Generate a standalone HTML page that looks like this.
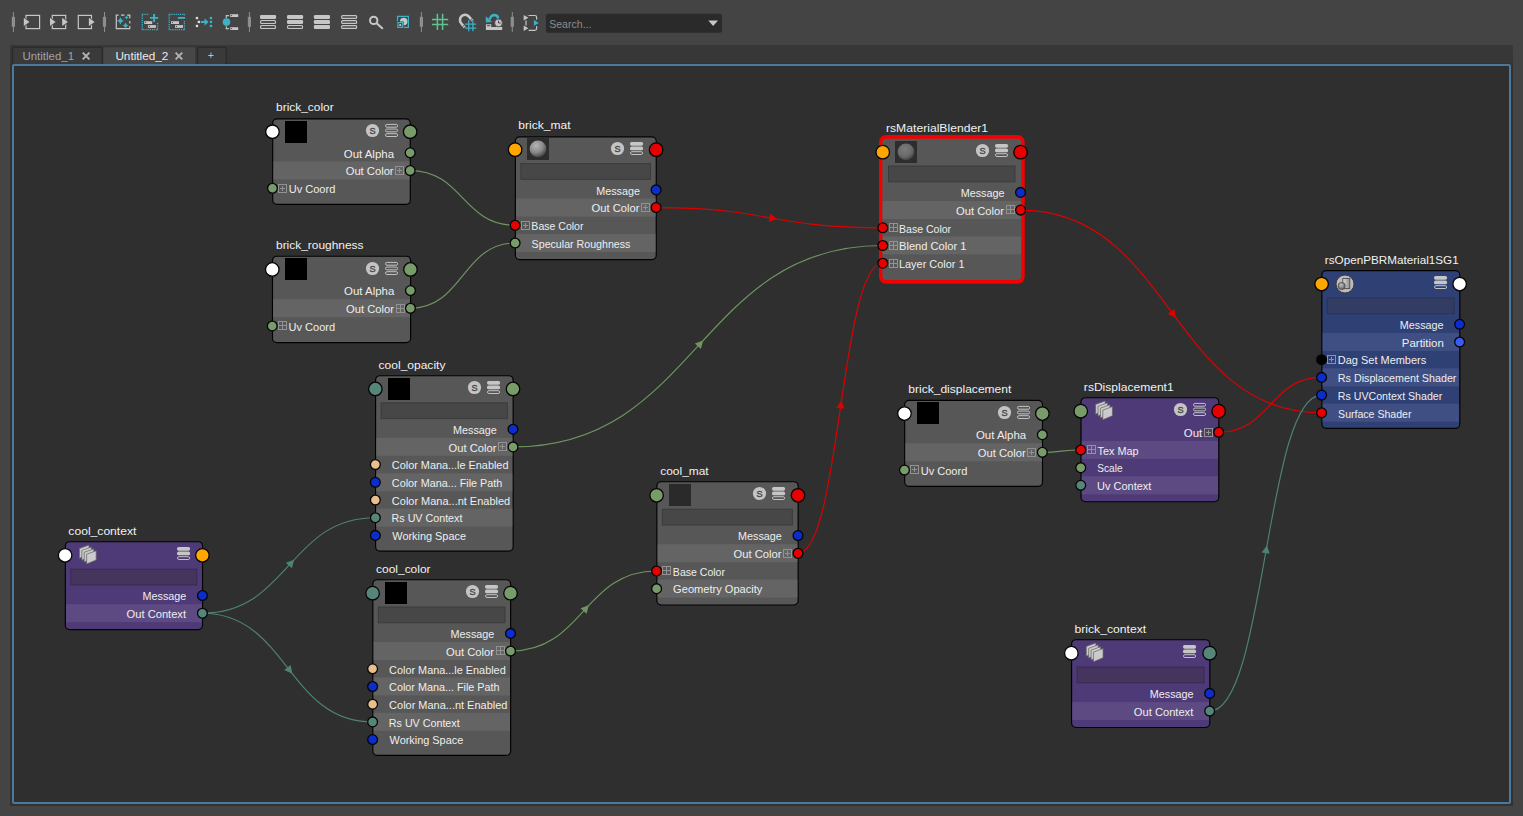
<!DOCTYPE html>
<html><head><meta charset="utf-8"><title>Node Editor</title>
<style>
html,body{margin:0;padding:0;}
body{width:1523px;height:816px;background:#444444;overflow:hidden;position:relative;font-family:"Liberation Sans",sans-serif;}
#tabbar{position:absolute;left:10px;top:45px;width:1503px;height:761px;background:#373737;}
#frame{position:absolute;left:10px;top:63px;width:1503px;height:743px;background:#323232;}
#canvas{position:absolute;left:12px;top:64px;width:1495px;height:736px;border:2px solid #4b799d;background:#2f2f2f;border-radius:2px;}
.tab{position:absolute;top:47px;height:17px;border:1px solid #2e2e2e;border-bottom:none;border-radius:3px 3px 0 0;box-sizing:border-box;font-size:11.3px;line-height:16px;color:#a9a9a9;background:#3b3b3b;white-space:nowrap;}
.tab.act{background:#484848;color:#e6e6e6;}
svg text.ttl{font-family:"Liberation Sans",sans-serif;font-size:11.6px;fill:#f1f1f1;}
svg text.rw{font-family:"Liberation Sans",sans-serif;font-size:10.4px;fill:#eeeeee;}
#g{position:absolute;left:0;top:0;}
</style></head><body>
<div id="tabbar"></div>
<div id="frame"></div>
<div id="canvas"></div>

<svg id="g" width="1523" height="816" viewBox="0 0 1523 816">
<defs>
<radialGradient id="sph" cx="0.38" cy="0.3" r="0.75"><stop offset="0" stop-color="#b4b4b4"/><stop offset="0.55" stop-color="#8a8a8a"/><stop offset="1" stop-color="#3e3e3e"/></radialGradient>
<linearGradient id="sgr" x1="0" y1="0" x2="1" y2="0"><stop offset="0" stop-color="#dcdcdc"/><stop offset="1" stop-color="#8c8c8c"/></linearGradient>
<radialGradient id="sgc" cx="0.4" cy="0.35" r="0.7"><stop offset="0" stop-color="#c4c4c4"/><stop offset="1" stop-color="#5a5a5a"/></radialGradient>
<radialGradient id="sph2" cx="0.42" cy="0.35" r="0.7"><stop offset="0" stop-color="#7c7c7c"/><stop offset="0.6" stop-color="#6a6a6a"/><stop offset="1" stop-color="#3c3c3c"/></radialGradient>
</defs>
<g id="toolbar">
<rect x="12.90" y="12" width="1" height="20" fill="#8e8e8e"/><rect x="11.80" y="16.8" width="3.2" height="10" fill="#8e8e8e"/>
<rect x="26" y="15.4" width="13.6" height="13.2" fill="none" stroke="#c6c6c6" stroke-width="1.2"/>
<path d="M23.80 17.80L29.50 21.90L23.80 26.00Z" fill="#c6c6c6" stroke="#444444" stroke-width="1.6" paint-order="stroke"/>
<rect x="52.3" y="15.4" width="13.4" height="13.2" fill="none" stroke="#c6c6c6" stroke-width="1.2"/>
<path d="M50.00 17.80L55.60 21.90L50.00 26.00Z" fill="#c6c6c6" stroke="#444444" stroke-width="1.6" paint-order="stroke"/>
<path d="M62.20 17.80L67.90 21.90L62.20 26.00Z" fill="#c6c6c6" stroke="#444444" stroke-width="1.6" paint-order="stroke"/>
<rect x="78.3" y="15.4" width="13.2" height="13.2" fill="none" stroke="#c6c6c6" stroke-width="1.2"/>
<path d="M88.90 17.80L94.60 21.90L88.90 26.00Z" fill="#c6c6c6" stroke="#444444" stroke-width="1.6" paint-order="stroke"/>
<rect x="104.00" y="12" width="1" height="20" fill="#8e8e8e"/><rect x="102.90" y="16.8" width="3.2" height="10" fill="#8e8e8e"/>
<path d="M118.6 15.2H116.3V28.7H129.8V26M121 15.2H124.5M127.2 15.2H129.8V18.2M129.8 21V23.5" fill="none" stroke="#c6c6c6" stroke-width="1.2"/>
<path d="M120.40 17.20Q121.19 20.01 124.00 20.80Q121.19 21.59 120.40 24.40Q119.61 21.59 116.80 20.80Q119.61 20.01 120.40 17.20Z" fill="#3db1c5"/>
<path d="M126.60 15.40Q127.06 17.04 128.70 17.50Q127.06 17.96 126.60 19.60Q126.14 17.96 124.50 17.50Q126.14 17.04 126.60 15.40Z" fill="#3db1c5"/>
<path d="M125.60 22.40Q126.26 24.74 128.60 25.40Q126.26 26.06 125.60 28.40Q124.94 26.06 122.60 25.40Q124.94 24.74 125.60 22.40Z" fill="#3db1c5"/>
<rect x="142.30" y="14.4" width="15.2" height="15.2" fill="none" stroke="#3db1c5" stroke-width="1.3" stroke-dasharray="1.25 0.921"/>
<rect x="149" y="13" width="10" height="9" fill="#444444"/>
<path d="M150 17.9H158.2M154.1 13.9V22" stroke="#3db1c5" stroke-width="1.9" fill="none"/>
<rect x="144.20" y="21.20" width="8" height="2.8" fill="#c6c6c6"/><rect x="145.10" y="22.10" width="1" height="1" fill="#3a3a3a"/>
<rect x="147.90" y="25.10" width="8" height="2.8" fill="#c6c6c6"/><rect x="148.80" y="26.00" width="1" height="1" fill="#3a3a3a"/>
<rect x="169.20" y="14.4" width="15.2" height="15.2" fill="none" stroke="#3db1c5" stroke-width="1.3" stroke-dasharray="1.25 0.921"/>
<rect x="177" y="15.5" width="9" height="5" fill="#444444"/>
<path d="M177.9 17.9H185.1" stroke="#3db1c5" stroke-width="1.8" fill="none"/>
<rect x="171.00" y="21.20" width="8" height="2.8" fill="#c6c6c6"/><rect x="171.90" y="22.10" width="1" height="1" fill="#3a3a3a"/>
<rect x="175.00" y="25.10" width="8" height="2.8" fill="#c6c6c6"/><rect x="175.90" y="26.00" width="1" height="1" fill="#3a3a3a"/>
<rect x="195.8" y="16.9" width="2.3" height="2.3" fill="#e0e0e0"/>
<rect x="197.7" y="20.8" width="2.3" height="2.3" fill="#e0e0e0"/>
<rect x="195.8" y="24.8" width="2.3" height="2.3" fill="#e0e0e0"/>
<rect x="209.8" y="16.9" width="2.3" height="2.3" fill="#3db1c5"/>
<rect x="209.8" y="20.8" width="2.3" height="2.3" fill="#3db1c5"/>
<rect x="209.8" y="24.8" width="2.3" height="2.3" fill="#3db1c5"/>
<path d="M200.8 21.1H204.6V18.2L208.5 22L204.6 25.8V22.9H200.8Z" fill="#3db1c5"/>
<circle cx="226.5" cy="22.1" r="3.8" fill="#3db1c5"/>
<path d="M226.3 17.9V15.6H228.9M226.3 26.3V28.6H228.9" fill="none" stroke="#c6c6c6" stroke-width="1.1"/>
<rect x="230.20" y="14.20" width="8" height="2.8" fill="#c6c6c6"/><rect x="231.10" y="15.10" width="1" height="1" fill="#3a3a3a"/>
<rect x="230.20" y="27.20" width="8" height="2.8" fill="#c6c6c6"/><rect x="231.10" y="28.10" width="1" height="1" fill="#3a3a3a"/>
<rect x="248.90" y="12" width="1" height="20" fill="#8e8e8e"/><rect x="247.80" y="16.8" width="3.2" height="10" fill="#8e8e8e"/>
<rect x="260.00" y="15.00" width="16.1" height="3.9" rx="1.2" fill="#c6c6c6"/><rect x="260.60" y="20.60" width="14.9" height="2.7" rx="0.9" fill="#262626" stroke="#c6c6c6" stroke-width="1.2"/><rect x="260.60" y="25.70" width="14.9" height="2.7" rx="0.9" fill="#262626" stroke="#c6c6c6" stroke-width="1.2"/>
<rect x="287.00" y="15.00" width="16.1" height="3.9" rx="1.2" fill="#c6c6c6"/><rect x="287.00" y="20.00" width="16.1" height="3.9" rx="1.2" fill="#c6c6c6"/><rect x="287.60" y="25.70" width="14.9" height="2.7" rx="0.9" fill="#262626" stroke="#c6c6c6" stroke-width="1.2"/>
<rect x="313.90" y="15.00" width="16.1" height="3.9" rx="1.2" fill="#c6c6c6"/><rect x="313.90" y="20.00" width="16.1" height="3.9" rx="1.2" fill="#c6c6c6"/><rect x="313.90" y="25.10" width="16.1" height="3.9" rx="1.2" fill="#c6c6c6"/>
<rect x="341.70" y="15.60" width="14.9" height="2.7" rx="0.9" fill="#444444" stroke="#c6c6c6" stroke-width="1.2"/><rect x="341.70" y="20.60" width="14.9" height="2.7" rx="0.9" fill="#444444" stroke="#c6c6c6" stroke-width="1.2"/><rect x="341.70" y="25.70" width="14.9" height="2.7" rx="0.9" fill="#444444" stroke="#c6c6c6" stroke-width="1.2"/>
<circle cx="373.7" cy="20.4" r="3.7" fill="none" stroke="#c6c6c6" stroke-width="2.0"/>
<path d="M376.9 23.5L382.2 28.2" stroke="#c6c6c6" stroke-width="2.2" stroke-linecap="round"/>
<path d="M397.5 21.2V16.4H408.4V27.4H404" fill="none" stroke="#3db1c5" stroke-width="1.2"/>
<rect x="397.9" y="22.6" width="4.8" height="4.8" fill="none" stroke="#3db1c5" stroke-width="1.2"/>
<rect x="399.3" y="24.1" width="1.9" height="1.9" fill="#c6c6c6"/>
<path d="M403.7 21.6H399.9A3.8 3.8 0 1 1 403.7 25.4Z" fill="#c6c6c6"/>
<rect x="420.90" y="12" width="1" height="20" fill="#8e8e8e"/><rect x="419.80" y="16.8" width="3.2" height="10" fill="#8e8e8e"/>
<path d="M437.4 13.8V30M442.6 13.8V30M432 19.6H448.2M432 24.5H448.2" stroke="#5fc392" stroke-width="1.5" fill="none"/>
<g transform="rotate(-40 465.5 20.5)"><path d="M460.4 25.2V19.8A5.1 5.1 0 0 1 470.6 19.8V25.2" fill="none" stroke="#c6c6c6" stroke-width="2.6"/><path d="M459.1 23.4H461.7M469.3 23.4H471.9" stroke="#444444" stroke-width="0.8"/></g>
<path d="M468.7 20.3V31.2M472.9 20.3V31.2M465 24.2H476.2M465 28.2H476.2" stroke="#444444" stroke-width="2.6" fill="none"/>
<path d="M468.7 20.3V31.2M472.9 20.3V31.2M465 24.2H476.2M465 28.2H476.2" stroke="#3db1c5" stroke-width="1.3" fill="none"/>
<path d="M485.9 24.3H491.3V27H502.2V30H485.9Z" fill="#c6c6c6"/>
<rect x="487" y="25.3" width="3.2" height="0.9" fill="#3a3a3a"/>
<path d="M489.6 19.6Q490.8 14.9 494.6 14.9Q497.9 15.1 498.1 18.6" fill="none" stroke="#3db1c5" stroke-width="2.5"/>
<path d="M485.8 16.2V22.5L492.2 21.9Z" fill="#3db1c5"/>
<circle cx="498.5" cy="22.9" r="3.9" fill="#c6c6c6" stroke="#444444" stroke-width="0.8"/>
<path d="M498.5 20.6V23H500.6" fill="none" stroke="#3a3a3a" stroke-width="0.9"/>
<rect x="511.80" y="12" width="1" height="20" fill="#8e8e8e"/><rect x="510.70" y="16.8" width="3.2" height="10" fill="#8e8e8e"/>
<rect x="526" y="15.5" width="10.6" height="14.8" rx="1.8" fill="none" stroke="#c6c6c6" stroke-width="1.2"/>
<rect x="523" y="15.2" width="5.6" height="5.2" fill="#444444"/><rect x="523" y="25.6" width="5.6" height="5.4" fill="#444444"/><rect x="533.4" y="19.6" width="5.8" height="6.6" fill="#444444"/>
<path d="M523.70 15.00L528.40 17.70L523.70 20.40Z" fill="#c6c6c6" stroke="#444444" stroke-width="1.6" paint-order="stroke"/>
<path d="M523.70 25.60L528.40 28.30L523.70 31.00Z" fill="#c6c6c6" stroke="#444444" stroke-width="1.6" paint-order="stroke"/>
<path d="M533.90 20.00L538.80 22.90L533.90 25.80Z" fill="#3db1c5" stroke="#444444" stroke-width="1.6" paint-order="stroke"/>
<rect x="545.9" y="13.8" width="176" height="19" rx="2.2" fill="#2a2a2a"/>
<text x="549.2" y="27.8" font-family="Liberation Sans, sans-serif" font-size="11.3" fill="#8c8c8c" textLength="42.3" lengthAdjust="spacingAndGlyphs">Search...</text>
<path d="M708.3 20.5H718L713.15 26Z" fill="#c6c6c6"/>
</g>
<g id="tabs">
<path d="M12.60 64V48.80Q12.60 47.30 14.10 47.30H100.80Q102.30 47.30 102.30 48.80V64" fill="#3a3a3a" stroke="#2b2b2b" stroke-width="1.3"/>
<path d="M103.30 64V48.80Q103.30 47.30 104.80 47.30H193.70Q195.20 47.30 195.20 48.80V64Z" fill="#474747"/>
<path d="M197.60 64V48.80Q197.60 47.30 199.10 47.30H224.80Q226.30 47.30 226.30 48.80V64" fill="#3a3a3a" stroke="#2b2b2b" stroke-width="1.3"/>
<text x="22.5" y="59.8" font-family="Liberation Sans, sans-serif" font-size="11.4" fill="#a2a2a2" textLength="51.5" lengthAdjust="spacingAndGlyphs">Untitled_1</text>
<path d="M82.7 52.6L89.4 59.3M89.4 52.6L82.7 59.3" stroke="#b4b4b4" stroke-width="1.9" fill="none"/>
<text x="115.4" y="59.8" font-family="Liberation Sans, sans-serif" font-size="11.4" fill="#ebebeb" textLength="52.9" lengthAdjust="spacingAndGlyphs">Untitled_2</text>
<path d="M175.6 52.6L182.3 59.3M182.3 52.6L175.6 59.3" stroke="#b4b4b4" stroke-width="1.9" fill="none"/>
<text x="210.9" y="59.2" font-family="Liberation Sans, sans-serif" font-size="10.5" fill="#c2c2c2" text-anchor="middle">+</text>
</g>
<g id="wires">
<path d="M410.15 170.55C462.62 170.55 462.62 225.30 515.10 225.30" fill="none" stroke="#6f9562" stroke-width="1.15"/>
<path d="M410.45 308.25C462.77 308.25 462.77 243.00 515.10 243.00" fill="none" stroke="#6f9562" stroke-width="1.15"/>
<path d="M656.10 207.60C769.42 207.60 769.42 227.80 882.75 227.80" fill="none" stroke="#e00000" stroke-width="1.15"/>
<path d="M777.10 219.07L768.71 221.74L770.14 213.66Z" fill="#e00000"/>
<path d="M513.00 446.90C697.88 446.90 697.88 245.50 882.75 245.50" fill="none" stroke="#6f9562" stroke-width="1.15"/>
<path d="M703.15 340.45L700.90 348.97L694.85 343.43Z" fill="#6f9562"/>
<path d="M798.00 553.25C840.38 553.25 840.38 263.20 882.75 263.20" fill="none" stroke="#e00000" stroke-width="1.15"/>
<path d="M841.50 400.51L844.43 408.82L836.32 407.63Z" fill="#e00000"/>
<path d="M1020.55 210.10C1171.07 210.10 1171.07 412.80 1321.60 412.80" fill="none" stroke="#e00000" stroke-width="1.15"/>
<path d="M1175.73 317.71L1167.78 313.89L1174.37 309.01Z" fill="#e00000"/>
<path d="M1218.65 432.25C1270.12 432.25 1270.12 377.40 1321.60 377.40" fill="none" stroke="#e00000" stroke-width="1.15"/>
<path d="M1042.35 452.35C1061.55 452.35 1061.55 449.95 1080.75 449.95" fill="none" stroke="#6f9562" stroke-width="1.15"/>
<path d="M1209.65 711.10C1265.62 711.10 1265.62 395.10 1321.60 395.10" fill="none" stroke="#4f8276" stroke-width="1.15"/>
<path d="M1266.99 545.42L1269.66 553.82L1261.59 552.38Z" fill="#4f8276"/>
<path d="M202.40 613.25C288.88 613.25 288.88 517.70 375.35 517.70" fill="none" stroke="#4f8276" stroke-width="1.15"/>
<path d="M294.11 559.69L291.91 568.23L285.84 562.72Z" fill="#4f8276"/>
<path d="M202.40 613.25C287.50 613.25 287.50 721.90 372.60 721.90" fill="none" stroke="#4f8276" stroke-width="1.15"/>
<path d="M292.31 673.72L284.27 670.10L290.73 665.05Z" fill="#4f8276"/>
<path d="M510.50 651.10C583.55 651.10 583.55 570.95 656.60 570.95" fill="none" stroke="#6f9562" stroke-width="1.15"/>
<path d="M588.80 605.26L586.58 613.79L580.52 608.26Z" fill="#6f9562"/>
</g>
<g id="nodes">
<text x="276.13" y="110.80" class="ttl" textLength="57.47" lengthAdjust="spacingAndGlyphs">brick_color</text>
<rect x="272.70" y="118.90" width="137.60" height="85.50" rx="4.4" fill="#575757" stroke="#020202" stroke-width="1.15"/>
<clipPath id="c1"><rect x="273.30" y="119.50" width="136.40" height="84.30" rx="3.8"/></clipPath>
<rect x="273.30" y="161.50" width="136.40" height="18.00" fill="#646464" clip-path="url(#c1)"/>
<rect x="285.00" y="121.00" width="22" height="22" fill="#000"/>
<circle cx="372.50" cy="130.50" r="6.6" fill="#c4c4c4"/><text x="372.50" y="133.80" font-size="9.2" text-anchor="middle" fill="#454545" stroke="#454545" stroke-width="0.35" font-family="Liberation Sans, sans-serif">S</text>
<rect x="385.50" y="124.40" width="12.1" height="2.8" rx="1.4" fill="none" stroke="#c2c2c2" stroke-width="1"/><rect x="385.50" y="129.05" width="12.1" height="2.8" rx="1.4" fill="none" stroke="#c2c2c2" stroke-width="1"/><rect x="385.50" y="133.70" width="12.1" height="2.8" rx="1.4" fill="none" stroke="#c2c2c2" stroke-width="1"/>
<text x="343.78" y="157.85" class="rw" textLength="50.23" lengthAdjust="spacingAndGlyphs">Out Alpha</text>
<circle cx="410.15" cy="152.85" r="4.90" fill="#789b6a" stroke="#050505" stroke-width="1.3"/>
<g stroke="#929292" stroke-width="1" fill="none"><rect x="395.50" y="166.50" width="8" height="8"/><path d="M397.00 170.50h5M399.50 168.00v5"/></g>
<text x="345.68" y="174.85" class="rw" textLength="47.92" lengthAdjust="spacingAndGlyphs">Out Color</text>
<circle cx="410.15" cy="170.55" r="4.90" fill="#789b6a" stroke="#050505" stroke-width="1.3"/>
<g stroke="#929292" stroke-width="1" fill="none"><rect x="278.50" y="184.50" width="8" height="8"/><path d="M280.00 188.50h5M282.50 186.00v5"/></g>
<text x="288.67" y="192.85" class="rw" textLength="46.65" lengthAdjust="spacingAndGlyphs">Uv Coord</text>
<circle cx="272.45" cy="188.25" r="4.90" fill="#789b6a" stroke="#050505" stroke-width="1.3"/>
<circle cx="272.45" cy="131.75" r="6.75" fill="#ffffff" stroke="#050505" stroke-width="1.3"/>
<circle cx="410.15" cy="131.75" r="6.75" fill="#789b6a" stroke="#050505" stroke-width="1.3"/>
<text x="276.03" y="249.00" class="ttl" textLength="87.48" lengthAdjust="spacingAndGlyphs">brick_roughness</text>
<rect x="272.50" y="256.20" width="138.10" height="86.45" rx="4.4" fill="#575757" stroke="#020202" stroke-width="1.15"/>
<clipPath id="c2"><rect x="273.10" y="256.80" width="136.90" height="85.25" rx="3.8"/></clipPath>
<rect x="273.10" y="299.20" width="136.90" height="18.00" fill="#646464" clip-path="url(#c2)"/>
<rect x="285.00" y="258.00" width="22" height="22" fill="#000"/>
<circle cx="372.50" cy="268.50" r="6.6" fill="#c4c4c4"/><text x="372.50" y="271.80" font-size="9.2" text-anchor="middle" fill="#454545" stroke="#454545" stroke-width="0.35" font-family="Liberation Sans, sans-serif">S</text>
<rect x="385.50" y="262.40" width="12.1" height="2.8" rx="1.4" fill="none" stroke="#c2c2c2" stroke-width="1"/><rect x="385.50" y="267.05" width="12.1" height="2.8" rx="1.4" fill="none" stroke="#c2c2c2" stroke-width="1"/><rect x="385.50" y="271.70" width="12.1" height="2.8" rx="1.4" fill="none" stroke="#c2c2c2" stroke-width="1"/>
<text x="344.08" y="294.85" class="rw" textLength="50.23" lengthAdjust="spacingAndGlyphs">Out Alpha</text>
<circle cx="410.45" cy="290.55" r="4.90" fill="#789b6a" stroke="#050505" stroke-width="1.3"/>
<g stroke="#929292" stroke-width="1" fill="none"><rect x="396.50" y="304.50" width="8" height="8"/><path d="M396.50 308.50h8M400.50 304.50v8"/></g>
<text x="345.98" y="312.85" class="rw" textLength="47.92" lengthAdjust="spacingAndGlyphs">Out Color</text>
<circle cx="410.45" cy="308.25" r="4.90" fill="#789b6a" stroke="#050505" stroke-width="1.3"/>
<g stroke="#929292" stroke-width="1" fill="none"><rect x="278.50" y="321.50" width="8" height="8"/><path d="M278.50 325.50h8M282.50 321.50v8"/></g>
<text x="288.47" y="330.85" class="rw" textLength="46.65" lengthAdjust="spacingAndGlyphs">Uv Coord</text>
<circle cx="272.25" cy="325.95" r="4.90" fill="#789b6a" stroke="#050505" stroke-width="1.3"/>
<circle cx="272.25" cy="269.45" r="6.75" fill="#ffffff" stroke="#050505" stroke-width="1.3"/>
<circle cx="410.45" cy="269.45" r="6.75" fill="#789b6a" stroke="#050505" stroke-width="1.3"/>
<text x="518.28" y="128.50" class="ttl" textLength="52.25" lengthAdjust="spacingAndGlyphs">brick_mat</text>
<rect x="515.35" y="136.85" width="140.90" height="122.80" rx="4.4" fill="#575757" stroke="#020202" stroke-width="1.15"/>
<clipPath id="c3"><rect x="515.95" y="137.45" width="139.70" height="121.60" rx="3.8"/></clipPath>
<rect x="515.95" y="198.55" width="139.70" height="18.00" fill="#646464" clip-path="url(#c3)"/>
<rect x="515.95" y="233.95" width="139.70" height="18.00" fill="#646464" clip-path="url(#c3)"/>
<rect x="520.85" y="163.60" width="129.65" height="15.7" fill="#474747" stroke="#3b3b3b" stroke-width="1"/>
<rect x="527.00" y="138.00" width="22" height="22" fill="#2d2d2d"/><circle cx="538.00" cy="148.90" r="8.4" fill="url(#sph)"/>
<circle cx="617.50" cy="148.50" r="6.6" fill="#c4c4c4"/><text x="617.50" y="151.80" font-size="9.2" text-anchor="middle" fill="#454545" stroke="#454545" stroke-width="0.35" font-family="Liberation Sans, sans-serif">S</text>
<rect x="630.00" y="141.90" width="13.1" height="3.8" rx="1.7" fill="#c6c6c6"/><rect x="630.00" y="146.55" width="13.1" height="3.8" rx="1.7" fill="#c6c6c6"/><rect x="630.50" y="151.70" width="12.1" height="2.8" rx="1.4" fill="none" stroke="#c2c2c2" stroke-width="1"/>
<text x="596.22" y="194.85" class="rw" textLength="43.75" lengthAdjust="spacingAndGlyphs">Message</text>
<circle cx="656.10" cy="189.90" r="4.90" fill="#0c2ccc" stroke="#050505" stroke-width="1.3"/>
<g stroke="#929292" stroke-width="1" fill="none"><rect x="641.50" y="203.50" width="8" height="8"/><path d="M643.00 207.50h5M645.50 205.00v5"/></g>
<text x="591.63" y="211.85" class="rw" textLength="47.92" lengthAdjust="spacingAndGlyphs">Out Color</text>
<circle cx="656.10" cy="207.60" r="4.90" fill="#e60000" stroke="#050505" stroke-width="1.3"/>
<g stroke="#929292" stroke-width="1" fill="none"><rect x="521.50" y="221.50" width="8" height="8"/><path d="M523.00 225.50h5M525.50 223.00v5"/></g>
<text x="531.36" y="229.85" class="rw" textLength="52.09" lengthAdjust="spacingAndGlyphs">Base Color</text>
<circle cx="515.10" cy="225.30" r="4.90" fill="#e60000" stroke="#050505" stroke-width="1.3"/>
<text x="531.63" y="247.85" class="rw" textLength="98.74" lengthAdjust="spacingAndGlyphs">Specular Roughness</text>
<circle cx="515.10" cy="243.00" r="4.90" fill="#789b6a" stroke="#050505" stroke-width="1.3"/>
<circle cx="515.10" cy="149.65" r="6.75" fill="#ffa700" stroke="#050505" stroke-width="1.3"/>
<circle cx="656.10" cy="149.65" r="6.75" fill="#e60000" stroke="#050505" stroke-width="1.3"/>
<text x="885.99" y="131.90" class="ttl" textLength="102.07" lengthAdjust="spacingAndGlyphs">rsMaterialBlender1</text>
<rect x="879.00" y="135.00" width="145.70" height="148.75" rx="7" fill="#f40000"/>
<rect x="882.40" y="138.75" width="138.90" height="141.25" rx="4" fill="#575757"/>
<clipPath id="c4"><rect x="882.40" y="138.75" width="138.90" height="141.25" rx="4"/></clipPath>
<rect x="882.40" y="201.05" width="138.90" height="18.00" fill="#646464" clip-path="url(#c4)"/>
<rect x="882.40" y="236.45" width="138.90" height="18.00" fill="#646464" clip-path="url(#c4)"/>
<rect x="888.50" y="166.10" width="126.45" height="15.7" fill="#474747" stroke="#3b3b3b" stroke-width="1"/>
<rect x="895.00" y="141.00" width="22" height="22" fill="#2d2d2d"/><circle cx="906.00" cy="151.90" r="8.4" fill="url(#sph2)"/>
<circle cx="982.50" cy="150.50" r="6.6" fill="#c4c4c4"/><text x="982.50" y="153.80" font-size="9.2" text-anchor="middle" fill="#454545" stroke="#454545" stroke-width="0.35" font-family="Liberation Sans, sans-serif">S</text>
<rect x="995.00" y="143.90" width="13.1" height="3.8" rx="1.7" fill="#c6c6c6"/><rect x="995.00" y="148.55" width="13.1" height="3.8" rx="1.7" fill="#c6c6c6"/><rect x="995.50" y="153.70" width="12.1" height="2.8" rx="1.4" fill="none" stroke="#c2c2c2" stroke-width="1"/>
<text x="960.67" y="196.85" class="rw" textLength="43.75" lengthAdjust="spacingAndGlyphs">Message</text>
<circle cx="1020.55" cy="192.40" r="4.90" fill="#0c2ccc" stroke="#050505" stroke-width="1.3"/>
<g stroke="#929292" stroke-width="1" fill="none"><rect x="1006.50" y="205.50" width="8" height="8"/><path d="M1006.50 209.50h8M1010.50 205.50v8"/></g>
<text x="956.08" y="214.85" class="rw" textLength="47.92" lengthAdjust="spacingAndGlyphs">Out Color</text>
<circle cx="1020.55" cy="210.10" r="4.90" fill="#e60000" stroke="#050505" stroke-width="1.3"/>
<g stroke="#929292" stroke-width="1" fill="none"><rect x="889.50" y="223.50" width="8" height="8"/><path d="M889.50 227.50h8M893.50 223.50v8"/></g>
<text x="899.01" y="232.85" class="rw" textLength="52.09" lengthAdjust="spacingAndGlyphs">Base Color</text>
<circle cx="882.75" cy="227.80" r="4.90" fill="#e60000" stroke="#050505" stroke-width="1.3"/>
<g stroke="#929292" stroke-width="1" fill="none"><rect x="889.50" y="241.50" width="8" height="8"/><path d="M889.50 245.50h8M893.50 241.50v8"/></g>
<text x="899.01" y="249.85" class="rw" textLength="67.45" lengthAdjust="spacingAndGlyphs">Blend Color 1</text>
<circle cx="882.75" cy="245.50" r="4.90" fill="#e60000" stroke="#050505" stroke-width="1.3"/>
<g stroke="#929292" stroke-width="1" fill="none"><rect x="889.50" y="259.50" width="8" height="8"/><path d="M889.50 263.50h8M893.50 259.50v8"/></g>
<text x="898.97" y="267.85" class="rw" textLength="65.60" lengthAdjust="spacingAndGlyphs">Layer Color 1</text>
<circle cx="882.75" cy="263.20" r="4.90" fill="#e60000" stroke="#050505" stroke-width="1.3"/>
<circle cx="882.75" cy="152.15" r="6.75" fill="#ffa700" stroke="#050505" stroke-width="1.3"/>
<circle cx="1020.55" cy="152.15" r="6.75" fill="#e60000" stroke="#050505" stroke-width="1.3"/>
<text x="1324.89" y="263.75" class="ttl" textLength="133.77" lengthAdjust="spacingAndGlyphs">rsOpenPBRMaterial1SG1</text>
<rect x="1321.85" y="270.60" width="137.95" height="157.80" rx="4.4" fill="#2f4074" stroke="#020202" stroke-width="1.15"/>
<clipPath id="c5"><rect x="1322.45" y="271.20" width="136.75" height="156.60" rx="3.8"/></clipPath>
<rect x="1322.45" y="332.95" width="136.75" height="18.00" fill="#3f4f83" clip-path="url(#c5)"/>
<rect x="1322.45" y="368.35" width="136.75" height="18.00" fill="#3f4f83" clip-path="url(#c5)"/>
<rect x="1322.45" y="403.75" width="136.75" height="18.00" fill="#3f4f83" clip-path="url(#c5)"/>
<rect x="1327.35" y="298.00" width="126.70" height="15.7" fill="#333c63" stroke="#2a3256" stroke-width="1"/>
<circle cx="1345.00" cy="284.00" r="9.0" fill="#bcbcbc" stroke="#3c3c3c" stroke-width="1"/><rect x="1342.80" y="278.40" width="7" height="10.2" fill="url(#sgr)" stroke="#4c4c4c" stroke-width="0.9"/><circle cx="1341.70" cy="286.00" r="3.5" fill="url(#sgc)" stroke="#4c4c4c" stroke-width="0.9"/>
<rect x="1434.00" y="275.90" width="13.1" height="3.8" rx="1.7" fill="#c6c6c6"/><rect x="1434.00" y="280.55" width="13.1" height="3.8" rx="1.7" fill="#c6c6c6"/><rect x="1434.50" y="285.70" width="12.1" height="2.8" rx="1.4" fill="none" stroke="#c2c2c2" stroke-width="1"/>
<text x="1399.77" y="328.85" class="rw" textLength="43.75" lengthAdjust="spacingAndGlyphs">Message</text>
<circle cx="1459.65" cy="324.30" r="4.90" fill="#0c2ccc" stroke="#050505" stroke-width="1.3"/>
<text x="1401.87" y="346.85" class="rw" textLength="41.96" lengthAdjust="spacingAndGlyphs">Partition</text>
<circle cx="1459.65" cy="342.00" r="4.90" fill="#3b5bf2" stroke="#050505" stroke-width="1.3"/>
<g stroke="#929292" stroke-width="1" fill="none"><rect x="1327.50" y="355.50" width="8" height="8"/><path d="M1329.00 359.50h5M1331.50 357.00v5"/></g>
<text x="1337.82" y="363.85" class="rw" textLength="88.40" lengthAdjust="spacingAndGlyphs">Dag Set Members</text>
<circle cx="1321.60" cy="359.70" r="4.90" fill="#000000" stroke="#050505" stroke-width="1.3"/>
<text x="1337.82" y="381.85" class="rw" textLength="118.63" lengthAdjust="spacingAndGlyphs">Rs Displacement Shader</text>
<circle cx="1321.60" cy="377.40" r="4.90" fill="#0c2ccc" stroke="#050505" stroke-width="1.3"/>
<text x="1337.82" y="399.85" class="rw" textLength="104.48" lengthAdjust="spacingAndGlyphs">Rs UVContext Shader</text>
<circle cx="1321.60" cy="395.10" r="4.90" fill="#0c2ccc" stroke="#050505" stroke-width="1.3"/>
<text x="1338.13" y="417.85" class="rw" textLength="73.32" lengthAdjust="spacingAndGlyphs">Surface Shader</text>
<circle cx="1321.60" cy="412.80" r="4.90" fill="#e60000" stroke="#050505" stroke-width="1.3"/>
<circle cx="1321.60" cy="284.05" r="6.75" fill="#ffa700" stroke="#050505" stroke-width="1.3"/>
<circle cx="1459.65" cy="284.05" r="6.75" fill="#ffffff" stroke="#050505" stroke-width="1.3"/>
<text x="378.59" y="368.90" class="ttl" textLength="66.83" lengthAdjust="spacingAndGlyphs">cool_opacity</text>
<rect x="375.60" y="375.70" width="137.55" height="175.45" rx="4.4" fill="#575757" stroke="#020202" stroke-width="1.15"/>
<clipPath id="c6"><rect x="376.20" y="376.30" width="136.35" height="174.25" rx="3.8"/></clipPath>
<rect x="376.20" y="437.85" width="136.35" height="18.00" fill="#646464" clip-path="url(#c6)"/>
<rect x="376.20" y="473.25" width="136.35" height="18.00" fill="#646464" clip-path="url(#c6)"/>
<rect x="376.20" y="508.65" width="136.35" height="18.00" fill="#646464" clip-path="url(#c6)"/>
<rect x="381.10" y="402.90" width="126.30" height="15.7" fill="#474747" stroke="#3b3b3b" stroke-width="1"/>
<rect x="388.00" y="378.00" width="22" height="22" fill="#000"/>
<circle cx="474.50" cy="387.50" r="6.6" fill="#c4c4c4"/><text x="474.50" y="390.80" font-size="9.2" text-anchor="middle" fill="#454545" stroke="#454545" stroke-width="0.35" font-family="Liberation Sans, sans-serif">S</text>
<rect x="487.00" y="380.90" width="13.1" height="3.8" rx="1.7" fill="#c6c6c6"/><rect x="487.00" y="385.55" width="13.1" height="3.8" rx="1.7" fill="#c6c6c6"/><rect x="487.50" y="390.70" width="12.1" height="2.8" rx="1.4" fill="none" stroke="#c2c2c2" stroke-width="1"/>
<text x="453.12" y="433.85" class="rw" textLength="43.75" lengthAdjust="spacingAndGlyphs">Message</text>
<circle cx="513.00" cy="429.20" r="4.90" fill="#0c2ccc" stroke="#050505" stroke-width="1.3"/>
<g stroke="#929292" stroke-width="1" fill="none"><rect x="498.50" y="442.50" width="8" height="8"/><path d="M500.00 446.50h5M502.50 444.00v5"/></g>
<text x="448.53" y="451.85" class="rw" textLength="47.92" lengthAdjust="spacingAndGlyphs">Out Color</text>
<circle cx="513.00" cy="446.90" r="4.90" fill="#789b6a" stroke="#050505" stroke-width="1.3"/>
<text x="391.88" y="468.85" class="rw" textLength="116.59" lengthAdjust="spacingAndGlyphs">Color Mana...le Enabled</text>
<circle cx="375.35" cy="464.60" r="4.90" fill="#e9bf8d" stroke="#050505" stroke-width="1.3"/>
<text x="391.88" y="486.85" class="rw" textLength="110.40" lengthAdjust="spacingAndGlyphs">Color Mana... File Path</text>
<circle cx="375.35" cy="482.30" r="4.90" fill="#0c2ccc" stroke="#050505" stroke-width="1.3"/>
<text x="391.88" y="504.85" class="rw" textLength="118.24" lengthAdjust="spacingAndGlyphs">Color Mana...nt Enabled</text>
<circle cx="375.35" cy="500.00" r="4.90" fill="#e9bf8d" stroke="#050505" stroke-width="1.3"/>
<text x="391.57" y="521.85" class="rw" textLength="70.84" lengthAdjust="spacingAndGlyphs">Rs UV Context</text>
<circle cx="375.35" cy="517.70" r="4.90" fill="#56867a" stroke="#050505" stroke-width="1.3"/>
<text x="392.30" y="539.85" class="rw" textLength="73.67" lengthAdjust="spacingAndGlyphs">Working Space</text>
<circle cx="375.35" cy="535.40" r="4.90" fill="#0c2ccc" stroke="#050505" stroke-width="1.3"/>
<circle cx="375.35" cy="388.95" r="6.75" fill="#56867a" stroke="#050505" stroke-width="1.3"/>
<circle cx="513.00" cy="388.95" r="6.75" fill="#789b6a" stroke="#050505" stroke-width="1.3"/>
<text x="376.09" y="572.90" class="ttl" textLength="54.46" lengthAdjust="spacingAndGlyphs">cool_color</text>
<rect x="372.85" y="579.70" width="137.80" height="175.70" rx="4.4" fill="#575757" stroke="#020202" stroke-width="1.15"/>
<clipPath id="c7"><rect x="373.45" y="580.30" width="136.60" height="174.50" rx="3.8"/></clipPath>
<rect x="373.45" y="642.05" width="136.60" height="18.00" fill="#646464" clip-path="url(#c7)"/>
<rect x="373.45" y="677.45" width="136.60" height="18.00" fill="#646464" clip-path="url(#c7)"/>
<rect x="373.45" y="712.85" width="136.60" height="18.00" fill="#646464" clip-path="url(#c7)"/>
<rect x="378.35" y="607.10" width="126.55" height="15.7" fill="#474747" stroke="#3b3b3b" stroke-width="1"/>
<rect x="385.00" y="582.00" width="22" height="22" fill="#000"/>
<circle cx="472.50" cy="591.50" r="6.6" fill="#c4c4c4"/><text x="472.50" y="594.80" font-size="9.2" text-anchor="middle" fill="#454545" stroke="#454545" stroke-width="0.35" font-family="Liberation Sans, sans-serif">S</text>
<rect x="485.00" y="584.90" width="13.1" height="3.8" rx="1.7" fill="#c6c6c6"/><rect x="485.00" y="589.55" width="13.1" height="3.8" rx="1.7" fill="#c6c6c6"/><rect x="485.50" y="594.70" width="12.1" height="2.8" rx="1.4" fill="none" stroke="#c2c2c2" stroke-width="1"/>
<text x="450.62" y="637.85" class="rw" textLength="43.75" lengthAdjust="spacingAndGlyphs">Message</text>
<circle cx="510.50" cy="633.40" r="4.90" fill="#0c2ccc" stroke="#050505" stroke-width="1.3"/>
<g stroke="#929292" stroke-width="1" fill="none"><rect x="496.50" y="646.50" width="8" height="8"/><path d="M496.50 650.50h8M500.50 646.50v8"/></g>
<text x="446.03" y="655.85" class="rw" textLength="47.92" lengthAdjust="spacingAndGlyphs">Out Color</text>
<circle cx="510.50" cy="651.10" r="4.90" fill="#789b6a" stroke="#050505" stroke-width="1.3"/>
<text x="389.13" y="673.85" class="rw" textLength="116.59" lengthAdjust="spacingAndGlyphs">Color Mana...le Enabled</text>
<circle cx="372.60" cy="668.80" r="4.90" fill="#e9bf8d" stroke="#050505" stroke-width="1.3"/>
<text x="389.13" y="690.85" class="rw" textLength="110.40" lengthAdjust="spacingAndGlyphs">Color Mana... File Path</text>
<circle cx="372.60" cy="686.50" r="4.90" fill="#0c2ccc" stroke="#050505" stroke-width="1.3"/>
<text x="389.13" y="708.85" class="rw" textLength="118.24" lengthAdjust="spacingAndGlyphs">Color Mana...nt Enabled</text>
<circle cx="372.60" cy="704.20" r="4.90" fill="#e9bf8d" stroke="#050505" stroke-width="1.3"/>
<text x="388.82" y="726.85" class="rw" textLength="70.84" lengthAdjust="spacingAndGlyphs">Rs UV Context</text>
<circle cx="372.60" cy="721.90" r="4.90" fill="#56867a" stroke="#050505" stroke-width="1.3"/>
<text x="389.55" y="743.85" class="rw" textLength="73.67" lengthAdjust="spacingAndGlyphs">Working Space</text>
<circle cx="372.60" cy="739.60" r="4.90" fill="#0c2ccc" stroke="#050505" stroke-width="1.3"/>
<circle cx="372.60" cy="593.15" r="6.75" fill="#56867a" stroke="#050505" stroke-width="1.3"/>
<circle cx="510.50" cy="593.15" r="6.75" fill="#789b6a" stroke="#050505" stroke-width="1.3"/>
<text x="68.34" y="534.90" class="ttl" textLength="68.10" lengthAdjust="spacingAndGlyphs">cool_context</text>
<rect x="65.35" y="541.70" width="137.20" height="87.90" rx="4.4" fill="#4e3a76" stroke="#020202" stroke-width="1.15"/>
<clipPath id="c8"><rect x="65.95" y="542.30" width="136.00" height="86.70" rx="3.8"/></clipPath>
<rect x="65.95" y="604.20" width="136.00" height="18.00" fill="#5d4a83" clip-path="url(#c8)"/>
<rect x="70.85" y="569.25" width="125.95" height="15.7" fill="#45345d" stroke="#3a2b50" stroke-width="1"/>
<path d="M79.40 548.55L89.00 545.05V554.20L79.40 558.30Z" fill="#cbcbcb" stroke="#616161" stroke-width="0.7" stroke-linejoin="round"/><path d="M81.80 550.45L91.40 546.95V556.10L81.80 560.20Z" fill="#cbcbcb" stroke="#616161" stroke-width="0.7" stroke-linejoin="round"/><path d="M84.20 552.35L93.80 548.85V558.00L84.20 562.10Z" fill="#cbcbcb" stroke="#616161" stroke-width="0.7" stroke-linejoin="round"/><path d="M86.60 554.25L96.20 550.75V559.90L86.60 564.00Z" fill="#cbcbcb" stroke="#616161" stroke-width="0.7" stroke-linejoin="round"/>
<rect x="177.00" y="546.90" width="13.1" height="3.8" rx="1.7" fill="#c6c6c6"/><rect x="177.00" y="551.55" width="13.1" height="3.8" rx="1.7" fill="#c6c6c6"/><rect x="177.50" y="556.70" width="12.1" height="2.8" rx="1.4" fill="none" stroke="#c2c2c2" stroke-width="1"/>
<text x="142.52" y="599.85" class="rw" textLength="43.75" lengthAdjust="spacingAndGlyphs">Message</text>
<circle cx="202.40" cy="595.55" r="4.90" fill="#0c2ccc" stroke="#050505" stroke-width="1.3"/>
<text x="126.63" y="617.85" class="rw" textLength="59.42" lengthAdjust="spacingAndGlyphs">Out Context</text>
<circle cx="202.40" cy="613.25" r="4.90" fill="#56867a" stroke="#050505" stroke-width="1.3"/>
<circle cx="65.10" cy="555.30" r="6.75" fill="#ffffff" stroke="#050505" stroke-width="1.3"/>
<circle cx="202.40" cy="555.30" r="6.75" fill="#ffa700" stroke="#050505" stroke-width="1.3"/>
<text x="660.24" y="474.90" class="ttl" textLength="48.45" lengthAdjust="spacingAndGlyphs">cool_mat</text>
<rect x="656.85" y="481.70" width="141.30" height="123.30" rx="4.4" fill="#575757" stroke="#020202" stroke-width="1.15"/>
<clipPath id="c9"><rect x="657.45" y="482.30" width="140.10" height="122.10" rx="3.8"/></clipPath>
<rect x="657.45" y="544.20" width="140.10" height="18.00" fill="#646464" clip-path="url(#c9)"/>
<rect x="657.45" y="579.60" width="140.10" height="18.00" fill="#646464" clip-path="url(#c9)"/>
<rect x="662.35" y="509.25" width="130.05" height="15.7" fill="#474747" stroke="#3b3b3b" stroke-width="1"/>
<rect x="669.00" y="484.00" width="22" height="22" fill="#2a2a2a"/>
<circle cx="759.50" cy="493.50" r="6.6" fill="#c4c4c4"/><text x="759.50" y="496.80" font-size="9.2" text-anchor="middle" fill="#454545" stroke="#454545" stroke-width="0.35" font-family="Liberation Sans, sans-serif">S</text>
<rect x="772.00" y="486.90" width="13.1" height="3.8" rx="1.7" fill="#c6c6c6"/><rect x="772.00" y="491.55" width="13.1" height="3.8" rx="1.7" fill="#c6c6c6"/><rect x="772.50" y="496.70" width="12.1" height="2.8" rx="1.4" fill="none" stroke="#c2c2c2" stroke-width="1"/>
<text x="738.12" y="539.85" class="rw" textLength="43.75" lengthAdjust="spacingAndGlyphs">Message</text>
<circle cx="798.00" cy="535.55" r="4.90" fill="#0c2ccc" stroke="#050505" stroke-width="1.3"/>
<g stroke="#929292" stroke-width="1" fill="none"><rect x="783.50" y="549.50" width="8" height="8"/><path d="M785.00 553.50h5M787.50 551.00v5"/></g>
<text x="733.53" y="557.85" class="rw" textLength="47.92" lengthAdjust="spacingAndGlyphs">Out Color</text>
<circle cx="798.00" cy="553.25" r="4.90" fill="#e60000" stroke="#050505" stroke-width="1.3"/>
<g stroke="#929292" stroke-width="1" fill="none"><rect x="662.50" y="566.50" width="8" height="8"/><path d="M662.50 570.50h8M666.50 566.50v8"/></g>
<text x="672.86" y="575.85" class="rw" textLength="52.09" lengthAdjust="spacingAndGlyphs">Base Color</text>
<circle cx="656.60" cy="570.95" r="4.90" fill="#e60000" stroke="#050505" stroke-width="1.3"/>
<text x="673.13" y="592.85" class="rw" textLength="89.22" lengthAdjust="spacingAndGlyphs">Geometry Opacity</text>
<circle cx="656.60" cy="588.65" r="4.90" fill="#789b6a" stroke="#050505" stroke-width="1.3"/>
<circle cx="656.60" cy="495.30" r="6.75" fill="#789b6a" stroke="#050505" stroke-width="1.3"/>
<circle cx="798.00" cy="495.30" r="6.75" fill="#e60000" stroke="#050505" stroke-width="1.3"/>
<text x="908.28" y="392.90" class="ttl" textLength="103.10" lengthAdjust="spacingAndGlyphs">brick_displacement</text>
<rect x="904.70" y="400.35" width="137.80" height="86.05" rx="4.4" fill="#575757" stroke="#020202" stroke-width="1.15"/>
<clipPath id="c10"><rect x="905.30" y="400.95" width="136.60" height="84.85" rx="3.8"/></clipPath>
<rect x="905.30" y="443.30" width="136.60" height="18.00" fill="#646464" clip-path="url(#c10)"/>
<rect x="917.00" y="402.00" width="22" height="22" fill="#000"/>
<circle cx="1004.50" cy="412.50" r="6.6" fill="#c4c4c4"/><text x="1004.50" y="415.80" font-size="9.2" text-anchor="middle" fill="#454545" stroke="#454545" stroke-width="0.35" font-family="Liberation Sans, sans-serif">S</text>
<rect x="1017.50" y="406.40" width="12.1" height="2.8" rx="1.4" fill="none" stroke="#c2c2c2" stroke-width="1"/><rect x="1017.50" y="411.05" width="12.1" height="2.8" rx="1.4" fill="none" stroke="#c2c2c2" stroke-width="1"/><rect x="1017.50" y="415.70" width="12.1" height="2.8" rx="1.4" fill="none" stroke="#c2c2c2" stroke-width="1"/>
<text x="975.98" y="438.85" class="rw" textLength="50.23" lengthAdjust="spacingAndGlyphs">Out Alpha</text>
<circle cx="1042.35" cy="434.65" r="4.90" fill="#789b6a" stroke="#050505" stroke-width="1.3"/>
<g stroke="#929292" stroke-width="1" fill="none"><rect x="1027.50" y="448.50" width="8" height="8"/><path d="M1029.00 452.50h5M1031.50 450.00v5"/></g>
<text x="977.88" y="456.85" class="rw" textLength="47.92" lengthAdjust="spacingAndGlyphs">Out Color</text>
<circle cx="1042.35" cy="452.35" r="4.90" fill="#789b6a" stroke="#050505" stroke-width="1.3"/>
<g stroke="#929292" stroke-width="1" fill="none"><rect x="910.50" y="465.50" width="8" height="8"/><path d="M912.00 469.50h5M914.50 467.00v5"/></g>
<text x="920.67" y="474.85" class="rw" textLength="46.65" lengthAdjust="spacingAndGlyphs">Uv Coord</text>
<circle cx="904.45" cy="470.05" r="4.90" fill="#789b6a" stroke="#050505" stroke-width="1.3"/>
<circle cx="904.45" cy="413.55" r="6.75" fill="#ffffff" stroke="#050505" stroke-width="1.3"/>
<circle cx="1042.35" cy="413.55" r="6.75" fill="#789b6a" stroke="#050505" stroke-width="1.3"/>
<text x="1083.89" y="390.90" class="ttl" textLength="89.77" lengthAdjust="spacingAndGlyphs">rsDisplacement1</text>
<rect x="1081.00" y="397.70" width="137.80" height="104.00" rx="4.4" fill="#4e3a76" stroke="#020202" stroke-width="1.15"/>
<clipPath id="c11"><rect x="1081.60" y="398.30" width="136.60" height="102.80" rx="3.8"/></clipPath>
<rect x="1081.60" y="440.90" width="136.60" height="18.00" fill="#5d4a83" clip-path="url(#c11)"/>
<rect x="1081.60" y="476.30" width="136.60" height="18.00" fill="#5d4a83" clip-path="url(#c11)"/>
<path d="M1095.60 404.40L1105.20 400.90V410.05L1095.60 414.15Z" fill="#cbcbcb" stroke="#616161" stroke-width="0.7" stroke-linejoin="round"/><path d="M1098.00 406.30L1107.60 402.80V411.95L1098.00 416.05Z" fill="#cbcbcb" stroke="#616161" stroke-width="0.7" stroke-linejoin="round"/><path d="M1100.40 408.20L1110.00 404.70V413.85L1100.40 417.95Z" fill="#cbcbcb" stroke="#616161" stroke-width="0.7" stroke-linejoin="round"/><path d="M1102.80 410.10L1112.40 406.60V415.75L1102.80 419.85Z" fill="#cbcbcb" stroke="#616161" stroke-width="0.7" stroke-linejoin="round"/>
<circle cx="1180.50" cy="409.50" r="6.6" fill="#c4c4c4"/><text x="1180.50" y="412.80" font-size="9.2" text-anchor="middle" fill="#454545" stroke="#454545" stroke-width="0.35" font-family="Liberation Sans, sans-serif">S</text>
<rect x="1193.50" y="403.40" width="12.1" height="2.8" rx="1.4" fill="none" stroke="#c2c2c2" stroke-width="1"/><rect x="1193.50" y="408.05" width="12.1" height="2.8" rx="1.4" fill="none" stroke="#c2c2c2" stroke-width="1"/><rect x="1193.50" y="412.70" width="12.1" height="2.8" rx="1.4" fill="none" stroke="#c2c2c2" stroke-width="1"/>
<g stroke="#929292" stroke-width="1" fill="none"><rect x="1204.50" y="428.50" width="8" height="8"/><path d="M1206.00 432.50h5M1208.50 430.00v5"/></g>
<text x="1183.88" y="436.85" class="rw" textLength="18.42" lengthAdjust="spacingAndGlyphs">Out</text>
<circle cx="1218.65" cy="432.25" r="4.90" fill="#e60000" stroke="#050505" stroke-width="1.3"/>
<g stroke="#929292" stroke-width="1" fill="none"><rect x="1087.50" y="445.50" width="8" height="8"/><path d="M1087.50 449.50h8M1091.50 445.50v8"/></g>
<text x="1097.59" y="454.85" class="rw" textLength="40.92" lengthAdjust="spacingAndGlyphs">Tex Map</text>
<circle cx="1080.75" cy="449.95" r="4.90" fill="#e60000" stroke="#050505" stroke-width="1.3"/>
<text x="1097.28" y="471.85" class="rw" textLength="25.24" lengthAdjust="spacingAndGlyphs">Scale</text>
<circle cx="1080.75" cy="467.65" r="4.90" fill="#789b6a" stroke="#050505" stroke-width="1.3"/>
<text x="1096.97" y="489.85" class="rw" textLength="54.44" lengthAdjust="spacingAndGlyphs">Uv Context</text>
<circle cx="1080.75" cy="485.35" r="4.90" fill="#56867a" stroke="#050505" stroke-width="1.3"/>
<circle cx="1080.75" cy="411.15" r="6.75" fill="#789b6a" stroke="#050505" stroke-width="1.3"/>
<circle cx="1218.65" cy="411.15" r="6.75" fill="#e60000" stroke="#050505" stroke-width="1.3"/>
<text x="1074.53" y="632.90" class="ttl" textLength="71.60" lengthAdjust="spacingAndGlyphs">brick_context</text>
<rect x="1071.60" y="639.70" width="138.20" height="87.75" rx="4.4" fill="#4e3a76" stroke="#020202" stroke-width="1.15"/>
<clipPath id="c12"><rect x="1072.20" y="640.30" width="137.00" height="86.55" rx="3.8"/></clipPath>
<rect x="1072.20" y="702.05" width="137.00" height="18.00" fill="#5d4a83" clip-path="url(#c12)"/>
<rect x="1077.10" y="667.10" width="126.95" height="15.7" fill="#45345d" stroke="#3a2b50" stroke-width="1"/>
<path d="M1086.25 646.40L1095.85 642.90V652.05L1086.25 656.15Z" fill="#cbcbcb" stroke="#616161" stroke-width="0.7" stroke-linejoin="round"/><path d="M1088.65 648.30L1098.25 644.80V653.95L1088.65 658.05Z" fill="#cbcbcb" stroke="#616161" stroke-width="0.7" stroke-linejoin="round"/><path d="M1091.05 650.20L1100.65 646.70V655.85L1091.05 659.95Z" fill="#cbcbcb" stroke="#616161" stroke-width="0.7" stroke-linejoin="round"/><path d="M1093.45 652.10L1103.05 648.60V657.75L1093.45 661.85Z" fill="#cbcbcb" stroke="#616161" stroke-width="0.7" stroke-linejoin="round"/>
<rect x="1183.00" y="644.90" width="13.1" height="3.8" rx="1.7" fill="#c6c6c6"/><rect x="1183.00" y="649.55" width="13.1" height="3.8" rx="1.7" fill="#c6c6c6"/><rect x="1183.50" y="654.70" width="12.1" height="2.8" rx="1.4" fill="none" stroke="#c2c2c2" stroke-width="1"/>
<text x="1149.77" y="697.85" class="rw" textLength="43.75" lengthAdjust="spacingAndGlyphs">Message</text>
<circle cx="1209.65" cy="693.40" r="4.90" fill="#0c2ccc" stroke="#050505" stroke-width="1.3"/>
<text x="1133.88" y="715.85" class="rw" textLength="59.42" lengthAdjust="spacingAndGlyphs">Out Context</text>
<circle cx="1209.65" cy="711.10" r="4.90" fill="#56867a" stroke="#050505" stroke-width="1.3"/>
<circle cx="1071.35" cy="653.15" r="6.75" fill="#ffffff" stroke="#050505" stroke-width="1.3"/>
<circle cx="1209.65" cy="653.15" r="6.75" fill="#56867a" stroke="#050505" stroke-width="1.3"/>
</g>
</svg>
</body></html>
